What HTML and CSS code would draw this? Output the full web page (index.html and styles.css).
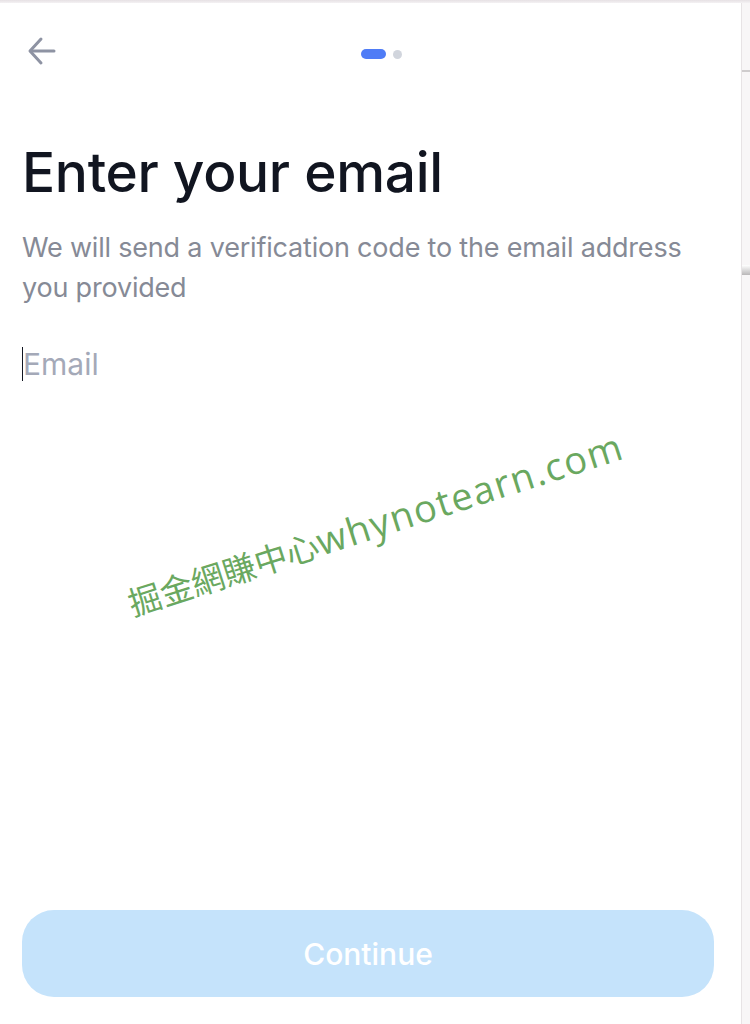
FILE: index.html
```html
<!DOCTYPE html>
<html lang="en">
<head>
    <meta charset="UTF-8">
    <meta name="viewport" content="width=device-width, initial-scale=1.0">
    <title>Enter your email</title>
    <link rel="stylesheet" href="styles.css">
</head>
<body>
    <div class="topbar"></div>
    <div class="page">
        <div class="panel">
            <div class="header">
                <button class="back-button" aria-label="Back">
                    <svg width="30" height="30" viewBox="0 0 30 30" fill="none" stroke="#8e93a3" stroke-width="3" stroke-linecap="round" stroke-linejoin="round">
                        <path d="M27 15H4"/>
                        <path d="M14 3L3 15l11 12"/>
                    </svg>
                </button>
                <div class="steps">
                    <span class="step active"></span>
                    <span class="step"></span>
                </div>
            </div>

            <h1 class="title">Enter your email</h1>
            <p class="subtitle">We will send a verification code to the email address you provided</p>

            <div class="email-field">
                <span class="caret"></span>
                <input class="email-input" type="email" placeholder="Email">
            </div>

            <button class="continue-button" disabled>Continue</button>

            <div class="watermark"><span class="wm-cjk">掘金網賺中心</span><span class="wm-latin">whynotearn.com</span></div>
        </div>
        <div class="side">
            <div class="side-line"></div>
            <div class="side-block"></div>
        </div>
    </div>
</body>
</html>
```

FILE: styles.css
```css
body {
    margin: 0;
    font-family: Inter, "Noto Sans", sans-serif;
    background-color: #f7f5f6;
}
.topbar {
    height: 3px;
    background: linear-gradient(#e6e1e4, #f4f1f3);
}
.page {
    display: flex;
    height: 1021px;
}
.panel {
    position: relative;
    width: 741px;
    background-color: #fff;
    display: flex;
    flex-direction: column;
    padding: 0 27px 27px 22px;
    box-sizing: border-box;
    overflow: hidden;
}
.side {
    flex: 1;
    border-left: 1px solid #e7e3e5;
    background-color: #f8f6f7;
}
.side-line {
    margin-top: 67px;
    height: 2px;
    background-color: #cfcccd;
}
.side-block {
    margin-top: 193px;
    height: 10px;
    background: linear-gradient(#ffffff, #b9b7b8);
}
.header {
    display: flex;
    align-items: center;
    height: 60px;
    margin-top: 18px;
}
.back-button {
    background: none;
    border: none;
    padding: 0;
    margin-left: 5px;
    width: 30px;
    height: 30px;
    cursor: pointer;
}
.steps {
    display: flex;
    align-items: center;
    gap: 7px;
    margin-left: 304px;
    margin-top: 6px;
}
.step {
    display: block;
    width: 9px;
    height: 9px;
    border-radius: 5px;
    background-color: #d1d5dd;
}
.step.active {
    width: 25px;
    height: 10px;
    background-color: #4f7cf6;
}
.title {
    margin: 56px 0 0;
    font-size: 55px;
    font-weight: 500;
    line-height: 70px;
    color: #111520;
    letter-spacing: -0.3px;
}
.subtitle {
    margin: 21px 0 0;
    font-size: 27px;
    line-height: 40px;
    color: #868a96;
    letter-spacing: -0.2px;
}
.email-field {
    display: flex;
    align-items: center;
    margin-top: 36px;
    height: 40px;
}
.caret {
    width: 2px;
    height: 34px;
    background-color: #111520;
}
.email-input {
    flex: 1;
    margin-left: -1px;
    border: none;
    outline: none;
    padding: 0;
    font-family: inherit;
    font-size: 30px;
    line-height: 40px;
    height: 40px;
    color: #111520;
}
.email-input::placeholder {
    color: #a4a9b8;
}
.continue-button {
    margin-top: auto;
    height: 87px;
    border: none;
    border-radius: 32px;
    background-color: #c5e3fb;
    color: #fff;
    font-family: inherit;
    font-size: 30px;
    font-weight: 500;
}
.watermark {
    position: absolute;
    left: 375px;
    top: 520px;
    transform: translate(-50%, -50%) rotate(-17.8deg);
    white-space: nowrap;
    color: #6aa860;
    pointer-events: none;
}
.wm-cjk {
    font-family: "Noto Sans CJK TC", sans-serif;
    font-size: 33px;
}
.wm-latin {
    font-family: "Open Sans", sans-serif;
    font-size: 38px;
    letter-spacing: 1.5px;
}
```
